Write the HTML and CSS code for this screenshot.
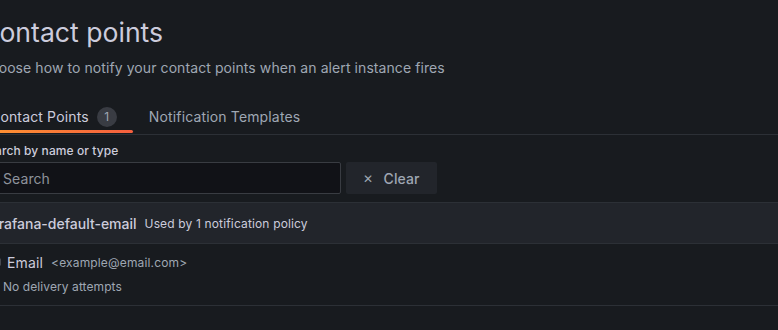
FILE: index.html
```html
<!DOCTYPE html>
<html>
<head>
    <title>Contact points</title>
    <link rel="stylesheet" href="styles.css">
</head>
<body>
    <div class="page">
        <h1 class="page-title">Contact points</h1>
        <p class="page-sub">Choose how to notify your contact points when an alert instance fires</p>

        <div class="tabs">
            <div class="tab active">Contact Points <span class="counter">1</span></div>
            <div class="tab">Notification Templates</div>
        </div>

        <div class="search">
            <label class="search-label">Search by name or type</label>
            <div class="search-row">
                <input type="text" class="search-input" placeholder="Search">
                <button class="btn-clear"><span class="x">&#x2715;</span> Clear</button>
            </div>
        </div>

        <div class="cp">
            <div class="cp-head">
                <span class="cp-name">grafana-default-email</span>
                <span class="cp-used">Used by 1 notification policy</span>
            </div>
            <div class="cp-body">
                <div class="integration">
                    <svg class="ico" width="14" height="14" viewBox="0 0 16 16"><rect x="1.5" y="3.5" width="13" height="9" rx="1.5" fill="none" stroke="#ccccdc" stroke-width="1.3"/><path d="M2 4.5 L8 9 L14 4.5" fill="none" stroke="#ccccdc" stroke-width="1.3"/></svg>
                    <span class="int-name">Email</span>
                    <span class="int-addr">&lt;example@email.com&gt;</span>
                </div>
                <div class="delivery">
                    <svg class="ico" width="12" height="12" viewBox="0 0 16 16"><circle cx="8" cy="8" r="6" fill="none" stroke="#9fa7b3" stroke-width="1.5"/></svg>
                    <span>No delivery attempts</span>
                </div>
            </div>
        </div>
    </div>
</body>
</html>
```

FILE: styles.css
```css
html {
    font-family: Inter, "Noto Sans", sans-serif;
    letter-spacing: 0.08px;
}
body {
    margin: 0;
    background: #181b1f;
    color: #ccccdc;
    overflow: hidden;
}
.page {
    margin-left: -20px;
    width: 798px;
    padding-top: 15px;
}
.page-title {
    margin: 0;
    font-size: 26.6px;
    font-weight: 400;
    line-height: 34px;
    letter-spacing: 0;
}
.page-sub {
    margin: 9px 0 0 0;
    font-size: 14px;
    line-height: 20px;
    color: #9fa7b3;
}

.tabs {
    display: flex;
    margin-top: 21px;
    margin-left: -6px;
    border-bottom: 1px solid #2c3036;
}
.tab {
    display: flex;
    align-items: center;
    gap: 8px;
    height: 35px;
    padding: 0 16px;
    font-size: 14px;
    letter-spacing: 0.15px;
    color: #9fa7b3;
    position: relative;
}
.tab.active {
    color: #ccccdc;
}
.tab.active::after {
    content: "";
    position: absolute;
    left: 0;
    right: 0;
    bottom: 1px;
    height: 3px;
    border-radius: 2px;
    background: linear-gradient(90deg, #ff9830, #f55f3e);
}
.counter {
    display: inline-flex;
    align-items: center;
    justify-content: center;
    width: 20px;
    height: 20px;
    border-radius: 10px;
    background: #393c43;
    font-size: 12px;
    letter-spacing: 0;
    color: #9fa7b3;
}

.search {
    padding-top: 8px;
}
.search-label {
    display: block;
    font-size: 12px;
    font-weight: 500;
    line-height: 16px;
    color: #ccccdc;
}
.search-row {
    display: flex;
    gap: 5px;
    margin-top: 3px;
}
.search-input {
    box-sizing: border-box;
    width: 361px;
    height: 32px;
    background: #111217;
    border: 1px solid #393c42;
    border-radius: 2px;
    padding: 0 0 0 22px;
    font-family: inherit;
    font-size: 14px;
    letter-spacing: 0.08px;
    color: #ccccdc;
    outline: none;
}
.search-input::placeholder {
    color: #8e939c;
}
.btn-clear {
    box-sizing: border-box;
    width: 91px;
    height: 32px;
    border: none;
    border-radius: 2px;
    background: #22252b;
    font-family: inherit;
    font-size: 14px;
    font-weight: 500;
    letter-spacing: 0.1px;
    color: #9fa7b3;
    display: flex;
    align-items: center;
    justify-content: center;
    gap: 6px;
}
.btn-clear .x {
    font-size: 12px;
    margin-right: 4px;
}

.cp {
    margin-top: 8px;
}
.cp-head {
    display: flex;
    align-items: center;
    gap: 8px;
    height: 40px;
    padding-left: 10px;
    background: #22252b;
    border-top: 1px solid #2c3036;
    border-bottom: 1px solid #2c3036;
}
.cp-name {
    font-size: 14px;
    font-weight: 500;
    letter-spacing: 0;
}
.cp-used {
    font-size: 12px;
    letter-spacing: 0.15px;
    color: #ccccdc;
}
.cp-body {
    padding: 8px 0 9px 7px;
    border-bottom: 1px solid #2c3036;
}
.integration {
    display: flex;
    align-items: center;
    height: 20px;
    gap: 6px;
}
.int-name {
    font-size: 14px;
    letter-spacing: 0.15px;
}
.int-addr {
    font-size: 12px;
    letter-spacing: 0.15px;
    color: #9fa7b3;
    margin-left: 2px;
}
.delivery {
    display: flex;
    align-items: center;
    gap: 8px;
    margin-top: 4px;
    height: 20px;
    font-size: 12px;
    color: #9fa7b3;
}
.delivery .ico {
    margin-left: -4px;
}
```
